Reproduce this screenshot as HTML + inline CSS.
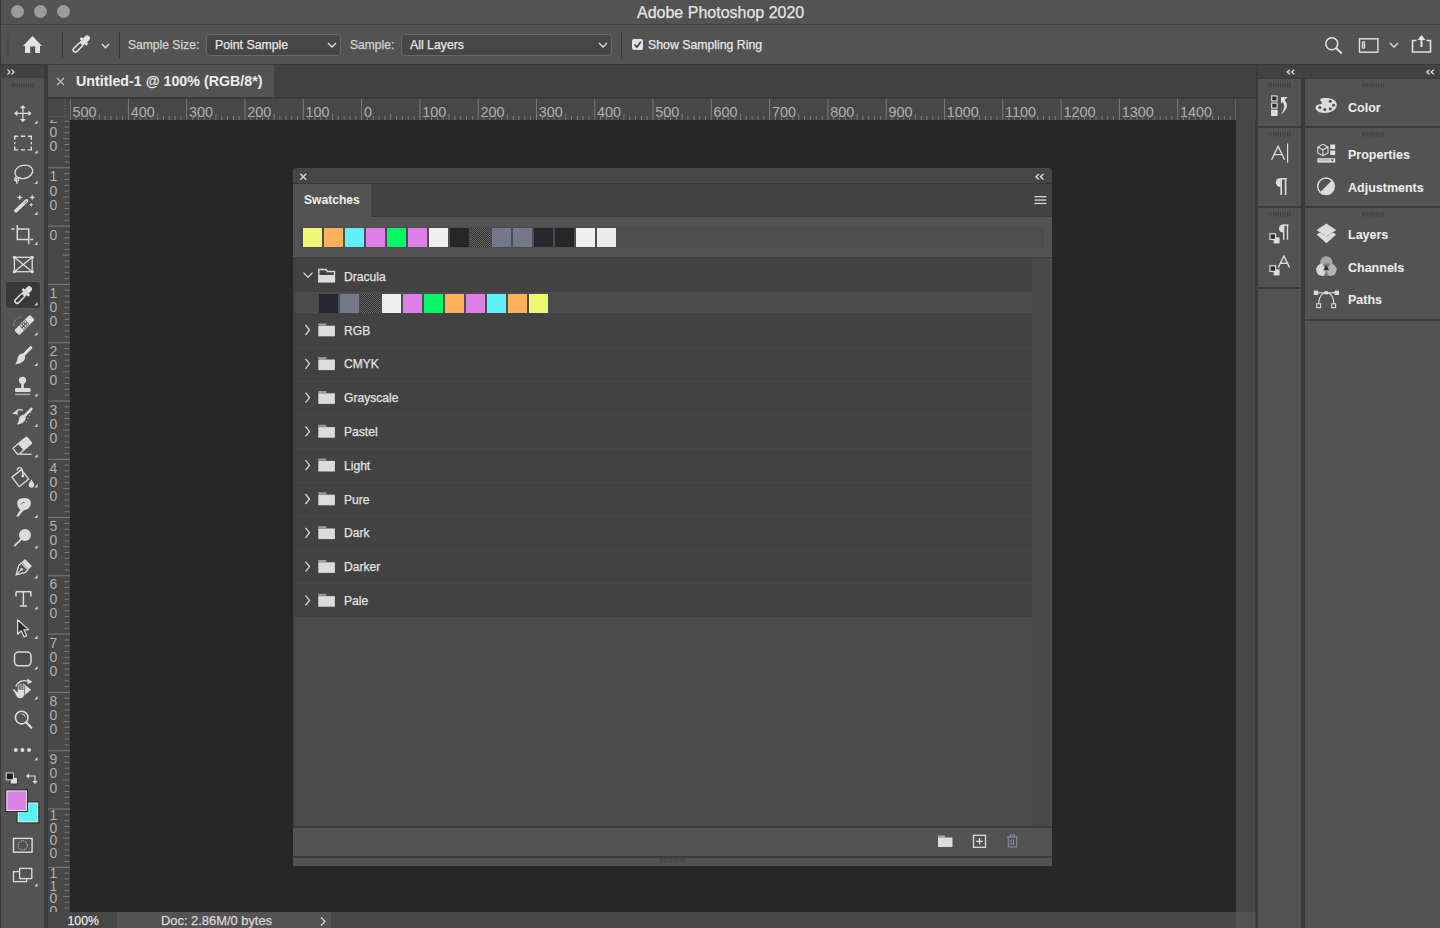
<!DOCTYPE html>
<html><head><meta charset="utf-8">
<style>
*{margin:0;padding:0;box-sizing:border-box}
html,body{width:1440px;height:928px;overflow:hidden;background:#3a3a3a;font-family:"Liberation Sans",sans-serif;color:#d8d8d8}
.a{position:absolute}
svg{position:absolute;overflow:visible}
.t{position:absolute;white-space:pre;line-height:1;-webkit-text-stroke:0.25px currentColor}
.b{font-weight:bold;-webkit-text-stroke:0.05px currentColor}
</style></head><body>

<div class="a" style="left:0px;top:0px;width:1440px;height:24px;background:#535353;"></div>
<div class="a" style="left:0px;top:24px;width:1440px;height:1.6px;background:#404040;"></div>
<div class="t" style="left:637px;top:5px;font-size:16px;color:#e4e4e4;">Adobe Photoshop 2020</div>
<div class="a" style="left:10.5px;top:4.5px;width:13px;height:13px;background:#9c9c9c;border-radius:50%"></div>
<div class="a" style="left:33.5px;top:4.5px;width:13px;height:13px;background:#9c9c9c;border-radius:50%"></div>
<div class="a" style="left:56.5px;top:4.5px;width:13px;height:13px;background:#9c9c9c;border-radius:50%"></div>
<div class="a" style="left:0px;top:25px;width:1440px;height:39px;background:#535353;"></div>
<div class="a" style="left:0px;top:64px;width:1440px;height:1px;background:#3a3a3a;"></div>
<svg style="left:0;top:0" width="1440" height="64">
<g fill="#3e3e3e"><rect x="7" y="34" width="1.5" height="1"/><rect x="7" y="36" width="1.5" height="1"/><rect x="7" y="38" width="1.5" height="1"/><rect x="7" y="40" width="1.5" height="1"/><rect x="7" y="42" width="1.5" height="1"/><rect x="7" y="44" width="1.5" height="1"/><rect x="7" y="46" width="1.5" height="1"/><rect x="7" y="48" width="1.5" height="1"/><rect x="7" y="50" width="1.5" height="1"/><rect x="7" y="52" width="1.5" height="1"/><rect x="7" y="54" width="1.5" height="1"/></g>
<path d="M32.5 36 L42 46 L40 46 L40 53 L35.2 53 L35.2 46.5 L30.2 46.5 L30.2 53 L25 53 L25 46 L23 46 Z" fill="#e2e2e2"/>
<rect x="62" y="32" width="1" height="26" fill="#3a3a3a"/>
<rect x="119" y="32" width="1" height="26" fill="#3a3a3a"/>
<rect x="621" y="32" width="1" height="26" fill="#3a3a3a"/>
<g transform="translate(81.3 44) rotate(45)" fill="#e2e2e2">
<path d="M-2.8 -5 L-2.8 -8.2 A2.8 2.8 0 0 1 2.8 -8.2 L2.8 -5 Z"/>
<rect x="-4.8" y="-5" width="9.6" height="2.6"/>
<rect x="-2.6" y="-2.6" width="5.2" height="2.8"/>
<path d="M-2.2 0 L-2.2 8.4 A2.2 2.2 0 0 0 2.2 8.4 L2.2 0" fill="none" stroke="#e2e2e2" stroke-width="1.5"/>
</g>
<path d="M102 44 L105.5 47.8 L109 44" fill="none" stroke="#e2e2e2" stroke-width="1.3"/>
<circle cx="1331.8" cy="43.8" r="6" fill="none" stroke="#e2e2e2" stroke-width="1.6"/>
<path d="M1336 48 L1341.8 53.5" stroke="#e2e2e2" stroke-width="2"/>
<rect x="1359.5" y="38.8" width="18.4" height="13.4" fill="none" stroke="#e2e2e2" stroke-width="1.4"/>
<rect x="1361.8" y="41.2" width="3.4" height="7.6" rx="1.2" fill="#e2e2e2"/><g fill="#555"><rect x="1362.8" y="42.6" width="1.4" height="1"/><rect x="1362.8" y="44.6" width="1.4" height="1"/><rect x="1362.8" y="46.6" width="1.4" height="1"/></g>
<path d="M1390 43 L1394 47 L1398 43" fill="none" stroke="#e2e2e2" stroke-width="1.3"/>
<path d="M1416.5 40.5 L1412.5 40.5 L1412.5 52 L1430.5 52 L1430.5 40.5 L1426.5 40.5" fill="none" stroke="#e2e2e2" stroke-width="1.6"/>
<rect x="1420.5" y="38.5" width="2" height="8.5" fill="#e2e2e2"/>
<path d="M1417.5 40 L1421.5 35 L1425.5 40 Z" fill="#e2e2e2"/>
</svg>
<div class="t" style="left:128px;top:39px;font-size:12.1px;color:#d4d4d4;">Sample Size:</div>
<div class="a" style="left:206px;top:34px;width:135px;height:22px;background:#464646;border:1px solid #686868;border-radius:4px"></div>
<div class="t" style="left:215px;top:39px;font-size:12.3px;color:#e6e6e6;">Point Sample</div>
<div class="t" style="left:350px;top:39px;font-size:12.1px;color:#d4d4d4;">Sample:</div>
<div class="a" style="left:401px;top:34px;width:211px;height:22px;background:#464646;border:1px solid #686868;border-radius:4px"></div>
<div class="t" style="left:410px;top:39px;font-size:12.3px;color:#e6e6e6;">All Layers</div>
<div class="a" style="left:632px;top:39px;width:11px;height:11px;background:#e2e2e2;border-radius:2px"></div>
<svg style="left:0;top:0" width="700" height="64"><path d="M328 43 L332 47 L336 43" fill="none" stroke="#e2e2e2" stroke-width="1.3"/><path d="M599 43 L603 47 L607 43" fill="none" stroke="#e2e2e2" stroke-width="1.3"/><path d="M634.5 44.5 L637 47 L640.8 41.8" fill="none" stroke="#3a3a3a" stroke-width="1.6"/></svg>
<div class="t" style="left:648px;top:39px;font-size:12.3px;color:#e6e6e6;">Show Sampling Ring</div>
<div class="a" style="left:1px;top:65px;width:43px;height:863px;background:#535353;"></div>
<div class="a" style="left:1px;top:65px;width:43px;height:13px;background:#424242;"></div>
<svg style="left:0;top:0" width="46" height="928">
<g fill="none" stroke="#dcdcdc" stroke-width="1.2"><path d="M7.5 69.5 L10 72 L7.5 74.5 M11.5 69.5 L14 72 L11.5 74.5"/></g>
<g fill="#3c3c3c"><rect x="12" y="83" width="1" height="4.5"/><rect x="14.3" y="83" width="1" height="4.5"/><rect x="16.6" y="83" width="1" height="4.5"/><rect x="18.9" y="83" width="1" height="4.5"/><rect x="21.2" y="83" width="1" height="4.5"/><rect x="23.5" y="83" width="1" height="4.5"/><rect x="25.8" y="83" width="1" height="4.5"/><rect x="28.1" y="83" width="1" height="4.5"/><rect x="30.4" y="83" width="1" height="4.5"/><rect x="32.7" y="83" width="1" height="4.5"/></g>
<g fill="#c8c8c8">
<path d="M37.6 120.3 V123.7 H34.2 Z"/><path d="M37.6 150 V153.4 H34.2 Z"/><path d="M37.6 180.5 V183.9 H34.2 Z"/><path d="M37.6 211.5 V214.9 H34.2 Z"/><path d="M37.6 241.5 V244.9 H34.2 Z"/>
<path d="M37.6 302 V305.4 H34.2 Z"/><path d="M37.6 332 V335.4 H34.2 Z"/><path d="M37.6 362.5 V365.9 H34.2 Z"/><path d="M37.6 393 V396.4 H34.2 Z"/><path d="M37.6 423.5 V426.9 H34.2 Z"/><path d="M37.6 454 V457.4 H34.2 Z"/><path d="M37.6 484 V487.4 H34.2 Z"/><path d="M37.6 514.5 V517.9 H34.2 Z"/><path d="M37.6 545 V548.4 H34.2 Z"/><path d="M37.6 575 V578.4 H34.2 Z"/><path d="M37.6 606 V609.4 H34.2 Z"/><path d="M37.6 635.5 V638.9 H34.2 Z"/><path d="M37.6 666 V669.4 H34.2 Z"/><path d="M37.6 696 V699.4 H34.2 Z"/><path d="M37.6 757 V760.4 H34.2 Z"/><path d="M37.6 883 V886.4 H34.2 Z"/>
</g>
<!-- move -->
<g fill="#dcdcdc" stroke="none">
<rect x="22.25" y="107.5" width="1.25" height="11.8"/><rect x="16.5" y="112.75" width="12.8" height="1.25"/>
<path d="M22.85 105 L25.8 108.3 L19.9 108.3 Z"/><path d="M22.85 122.3 L25.8 119 L19.9 119 Z"/>
<path d="M14 113.35 L17.3 110.4 L17.3 116.3 Z"/><path d="M31.6 113.35 L28.3 110.4 L28.3 116.3 Z"/>
</g>
<!-- marquee -->
<path d="M14.7 139.8 V136.3 H18.2 M20.9 136.3 H25.1 M27.8 136.3 H31.3 V139.8 M31.3 142 V144.2 M31.3 146.4 V149.9 H27.8 M25.1 149.9 H20.9 M18.2 149.9 H14.7 V146.4 M14.7 144.2 V142" fill="none" stroke="#dcdcdc" stroke-width="1.4"/>
<!-- lasso -->
<g fill="none" stroke="#dcdcdc" stroke-width="1.3">
<ellipse cx="23.8" cy="171.8" rx="9" ry="6.6" transform="rotate(-12 23.8 171.8)"/>
<path d="M16.5 176.5 C14 178 14 181 16.5 181.2 C19 181.4 19.5 178.5 17.2 178.2 C15.5 178 16.5 182 17.2 184"/>
</g>
<!-- magic wand -->
<path d="M16 210.8 L26.6 200.8" stroke="#dcdcdc" stroke-width="3.6" stroke-linecap="round"/>
<path d="M24.6 203.2 L26.8 201.1" stroke="#535353" stroke-width="0.9"/>
<g fill="#dcdcdc">
<path d="M19.8 194.4 L20.6 196.6 L22.8 197.4 L20.6 198.2 L19.8 200.4 L19 198.2 L16.8 197.4 L19 196.6 Z"/>
<path d="M32.2 194.4 L33 196.6 L35.2 197.4 L33 198.2 L32.2 200.4 L31.4 198.2 L29.2 197.4 L31.4 196.6 Z"/>
<path d="M31.2 202.6 L31.8 204.2 L33.4 204.8 L31.8 205.4 L31.2 207 L30.6 205.4 L29 204.8 L30.6 204.2 Z"/>
</g>
<!-- crop -->
<path d="M17.3 225 V239.5 H28.7 M17.3 229.1 H28.7 V244 M11.4 229.1 H14.6 M30.2 239.5 H33.2" fill="none" stroke="#dcdcdc" stroke-width="1.5"/>
<!-- frame -->
<g fill="none" stroke="#dcdcdc" stroke-width="1.3"><rect x="14.4" y="257.3" width="17.8" height="14.4"/><path d="M14.4 257.3 L32.2 271.7 M32.2 257.3 L14.4 271.7"/></g>
<g fill="#dcdcdc"><circle cx="14.4" cy="257.3" r="1.6"/><circle cx="32.2" cy="257.3" r="1.6"/><circle cx="14.4" cy="271.7" r="1.6"/><circle cx="32.2" cy="271.7" r="1.6"/></g>
<!-- eyedropper selected -->
<rect x="5.5" y="281.5" width="35" height="27" rx="3" fill="#393939" stroke="#5a5a5a" stroke-width="1"/>
<path d="M37.6 302 V305.4 H34.2 Z" fill="#c8c8c8"/>
<g transform="translate(23.2 295) rotate(45)" fill="#dcdcdc">
<path d="M-2.8 -5 L-2.8 -8.4 A2.8 2.8 0 0 1 2.8 -8.4 L2.8 -5 Z"/>
<rect x="-4.8" y="-5" width="9.6" height="2.6"/>
<rect x="-2.6" y="-2.6" width="5.2" height="2.8"/>
<path d="M-2.2 0 L-2.2 8.6 A2.2 2.2 0 0 0 2.2 8.6 L2.2 0" fill="none" stroke="#dcdcdc" stroke-width="1.5"/>
</g>
<!-- healing -->
<g transform="translate(24.5 325) rotate(-45)">
<rect x="-11" y="-3.6" width="22" height="7.2" rx="1.5" fill="#dcdcdc"/>
<rect x="-4.2" y="-3" width="8.4" height="6" fill="#535353"/>
<g fill="#dcdcdc"><rect x="-3.6" y="-2.4" width="1.8" height="1.8"/><rect x="-0.9" y="-2.4" width="1.8" height="1.8"/><rect x="1.8" y="-2.4" width="1.8" height="1.8"/><rect x="-3.6" y="0.6" width="1.8" height="1.8"/><rect x="-0.9" y="0.6" width="1.8" height="1.8"/><rect x="1.8" y="0.6" width="1.8" height="1.8"/></g>
</g>
<path d="M13.8 326 A8 8 0 0 1 22.5 317" fill="none" stroke="#bdbdbd" stroke-width="1" stroke-dasharray="1 1.4"/>
<!-- brush -->
<path d="M30.8 347.6 L23.8 354.8" stroke="#dcdcdc" stroke-width="3" stroke-linecap="round"/>
<path d="M22.6 353.6 C19.5 353.8 17.8 356 17.5 358.5 C17.3 360.5 16.5 362.5 15.3 364.2 C18 364 21 363.2 23 361.5 C25 359.8 25.5 357.5 25 356 Z" fill="#dcdcdc"/>
<!-- stamp -->
<g fill="#dcdcdc"><circle cx="22.5" cy="380.3" r="3.6"/><rect x="21.2" y="382.5" width="2.6" height="5.8"/><rect x="15" y="388" width="15.6" height="4" rx="1"/></g>
<rect x="15.2" y="393.6" width="15.2" height="1.6" fill="#a8a8a8"/>
<!-- history brush -->
<path d="M31.4 409 L24.6 415.8" stroke="#dcdcdc" stroke-width="2.6" stroke-linecap="round"/>
<path d="M23.5 414.8 C20.8 415 19.3 417 19 419.2 C18.8 421 18 422.8 16.8 424.5 C19.3 424.3 22 423.5 23.7 422 C25.6 420.3 26 418.3 25.6 417 Z" fill="#dcdcdc"/>
<path d="M22.8 410.5 C20.5 409.3 17.5 409.8 15.5 412" fill="none" stroke="#dcdcdc" stroke-width="1.2"/>
<path d="M12 413.5 L17.5 410 L17.8 414.8 Z" fill="#dcdcdc"/>
<g fill="#b8b8b8"><circle cx="29.5" cy="415.5" r="0.6"/><circle cx="28" cy="418.5" r="0.6"/><circle cx="26.5" cy="421.5" r="0.6"/><circle cx="30.5" cy="412.5" r="0.6"/></g>
<!-- eraser -->
<g transform="translate(22.3 445.8) rotate(-40)">
<rect x="-9" y="-4.2" width="18" height="8.4" rx="1" fill="none" stroke="#dcdcdc" stroke-width="1.3"/>
<rect x="-2" y="-4.2" width="11" height="8.4" rx="1" fill="#dcdcdc"/>
</g>
<rect x="20" y="453.6" width="11.6" height="1.3" fill="#dcdcdc"/>
<!-- bucket -->
<g transform="translate(20.3 478.2) rotate(-38)">
<rect x="-6" y="-6" width="12" height="12" fill="none" stroke="#dcdcdc" stroke-width="1.3"/>
</g>
<path d="M17.2 470.5 C17.5 467 21.5 466.8 22.3 469.8 L22.9 475.6" fill="none" stroke="#dcdcdc" stroke-width="1.2"/>
<circle cx="22.9" cy="476" r="1.4" fill="#dcdcdc"/>
<path d="M31.4 479.6 C29.9 482 28.7 483.4 28.7 485 A2.7 2.7 0 0 0 34.1 485 C34.1 483.4 32.9 482 31.4 479.6 Z" fill="#dcdcdc"/>
<!-- smudge -->
<path d="M17.5 505.5 C16.5 501.5 18 498.5 22.5 498.2 C26.8 497.8 30.5 498.8 30.8 502.5 C31 505.5 29.5 508.5 26.5 509.5 C24.8 510 23.5 510.5 22.5 511.5 L18.8 516.2 C17.8 517.2 16.2 516.5 16.8 515.2 L20.5 509.5 C19.5 509.2 18 507.5 17.5 505.5 Z" fill="#dcdcdc"/>
<path d="M20.8 504.5 C21.8 502.8 23.2 502.2 24.8 502.5" fill="none" stroke="#535353" stroke-width="0.9"/>
<!-- dodge -->
<circle cx="25" cy="535" r="6" fill="#dcdcdc"/>
<path d="M14.8 545.6 L21 539.4" stroke="#dcdcdc" stroke-width="1.8" stroke-linecap="round"/>
<!-- pen -->
<g transform="translate(23.5 567.5) rotate(45)">
<path d="M-4.8 -1.5 L-4.8 2 L0 10.5 L4.8 2 L4.8 -1.5 Z" fill="none" stroke="#dcdcdc" stroke-width="1.3"/>
<rect x="-5" y="-7" width="10" height="4.6" fill="#dcdcdc"/>
<path d="M0 2.5 V10" stroke="#dcdcdc" stroke-width="1"/>
<circle cx="0" cy="2.5" r="1.3" fill="#dcdcdc"/>
</g>
<!-- type -->
<path d="M16 591.8 H30.8 V596.5 M16 591.8 V596.5 M23.4 591.8 V606 M19.8 606 H27" fill="none" stroke="#dcdcdc" stroke-width="1.5"/>
<!-- path select -->
<path d="M17.6 619.8 L17.6 634.2 L21.2 630.8 L24 636.8 L26.6 635.6 L23.8 629.8 L28.6 629.6 Z" fill="#2c2c2c" stroke="#dcdcdc" stroke-width="1.2" stroke-linejoin="round"/>
<!-- shape -->
<rect x="14.5" y="652" width="16.5" height="13.8" rx="4" fill="#4e4e4e" stroke="#dcdcdc" stroke-width="1.5"/>
<!-- hand rotate -->
<path d="M23 683.2 L31.2 689.8 L23 696.4 Z" fill="#dcdcdc"/>
<path d="M15.8 686.5 C17.5 681.5 23 679.5 28.5 681.2" fill="none" stroke="#dcdcdc" stroke-width="1.2"/>
<path d="M32.5 681.8 L27.2 678.6 L27.6 684.2 Z" fill="#dcdcdc"/>
<g fill="#dcdcdc" stroke="#535353" stroke-width="0.7">
<path d="M15.6 690.2 C14.6 689 13.2 688.6 12.8 689.3 C12.4 690 13.6 691.4 14.8 693.2 C16 695.5 17 698.6 20 698.6 C23 698.6 24.6 696.5 24.6 693.5 V686.4 C24.6 685.2 22.8 685.2 22.8 686.4 V690 V684.6 C22.8 683.4 21 683.4 21 684.6 V689.8 V684 C21 682.8 19.2 682.8 19.2 684 V689.8 V685 C19.2 683.8 17.4 683.8 17.4 685 V692 C16.8 691.4 16.2 690.8 15.6 690.2 Z"/>
</g>
<!-- zoom -->
<circle cx="21.7" cy="717.6" r="6.3" fill="none" stroke="#dcdcdc" stroke-width="1.6"/>
<path d="M26.2 722.3 L31.3 727.7" stroke="#dcdcdc" stroke-width="2.3" stroke-linecap="round"/>
<path d="M21.5 713.8 A4 4 0 0 1 25.2 716.8" fill="none" stroke="#dcdcdc" stroke-width="1"/>
<!-- more -->
<g fill="#dcdcdc"><circle cx="15.8" cy="750" r="2"/><circle cx="22.4" cy="750" r="2"/><circle cx="29" cy="750" r="2"/></g>
<!-- default colors -->
<rect x="10.2" y="777.2" width="7.2" height="6.8" fill="#dcdcdc" stroke="#2a2a2a" stroke-width="0.8"/>
<rect x="6.2" y="773" width="7.2" height="6.8" fill="#1e1e1e" stroke="#dcdcdc" stroke-width="1"/>
<!-- swap -->
<path d="M28.5 776 H35 V782" fill="none" stroke="#dcdcdc" stroke-width="1.2"/>
<path d="M26 776 L29 773.3 V778.7 Z M35 784 L32.3 781 H37.7 Z" fill="#dcdcdc"/>
<!-- colors -->
<rect x="16.6" y="801.5" width="22.6" height="21.8" fill="#2a2a2a"/>
<rect x="17.6" y="802.5" width="20.6" height="19.8" fill="#eeeeee"/>
<rect x="18.6" y="803.5" width="18.6" height="17.8" fill="#5ef0f7"/>
<rect x="5.3" y="789.4" width="22.6" height="22.6" fill="#2a2a2a"/>
<rect x="6.3" y="790.4" width="20.6" height="20.6" fill="#eeeeee"/>
<rect x="7.3" y="791.4" width="18.6" height="18.6" fill="#dc80e8"/>
<!-- quick mask -->
<rect x="13.5" y="838.4" width="18.6" height="13.8" fill="none" stroke="#dcdcdc" stroke-width="1.4"/>
<circle cx="22.7" cy="845.3" r="4.6" fill="none" stroke="#dcdcdc" stroke-width="1" stroke-dasharray="1.1 1.3"/>
<!-- screen mode -->
<rect x="19.6" y="868.4" width="12.2" height="10.2" fill="none" stroke="#dcdcdc" stroke-width="1.3"/>
<path d="M19.6 871.6 H13.5 V881.6 H26.6 V878.6" fill="none" stroke="#dcdcdc" stroke-width="1.3"/>
</svg>

<div class="a" style="left:48px;top:65px;width:1208px;height:32px;background:#424242;"></div>
<div class="a" style="left:48px;top:65px;width:226px;height:32px;background:#535353;"></div>
<div class="a" style="left:48px;top:97px;width:1208px;height:2px;background:#3a3a3a;"></div>
<svg style="left:0;top:0" width="80" height="98"><path d="M57 78 L64 85 M64 78 L57 85" stroke="#bdbdbd" stroke-width="1.2"/></svg>
<div class="t b" style="left:76px;top:74.2px;font-size:14.25px;color:#ececec;">Untitled-1 @ 100% (RGB/8*)</div>
<div class="a" style="left:48px;top:99px;width:1208px;height:21px;background:#474747;"></div>
<div class="a" style="left:48px;top:120px;width:22px;height:792px;background:#474747;"></div>
<svg style="left:0;top:0" width="80" height="130"><path d="M48 116.5 H68" stroke="#666" stroke-width="1" stroke-dasharray="1 2"/><path d="M64.5 99 V120" stroke="#666" stroke-width="1" stroke-dasharray="1 2"/></svg>
<div class="a" style="left:70px;top:120px;width:1166px;height:792px;background:#272727;"></div>
<div class="a" style="left:70px;top:99px;width:1166px;height:21px;overflow:hidden"><div class="a" style="left:-70px;top:-99px;width:1440px;height:928px"><svg style="left:0;top:0" width="1440" height="928"><rect x="69.7" y="99" width="1" height="21" fill="#7a7a7a"/><text x="72.5" y="117" font-size="14.4" fill="#b0b0b0">500</text><rect x="75.5" y="116" width="1" height="4" fill="#7a7a7a"/><rect x="81.3" y="116" width="1" height="4" fill="#7a7a7a"/><rect x="87.1" y="116" width="1" height="4" fill="#7a7a7a"/><rect x="93.0" y="116" width="1" height="4" fill="#7a7a7a"/><rect x="98.8" y="114" width="1" height="6" fill="#7a7a7a"/><rect x="104.6" y="116" width="1" height="4" fill="#7a7a7a"/><rect x="110.5" y="116" width="1" height="4" fill="#7a7a7a"/><rect x="116.3" y="116" width="1" height="4" fill="#7a7a7a"/><rect x="122.1" y="116" width="1" height="4" fill="#7a7a7a"/><rect x="127.9" y="99" width="1" height="21" fill="#7a7a7a"/><text x="130.7" y="117" font-size="14.4" fill="#b0b0b0">400</text><rect x="133.8" y="116" width="1" height="4" fill="#7a7a7a"/><rect x="139.6" y="116" width="1" height="4" fill="#7a7a7a"/><rect x="145.4" y="116" width="1" height="4" fill="#7a7a7a"/><rect x="151.3" y="116" width="1" height="4" fill="#7a7a7a"/><rect x="157.1" y="114" width="1" height="6" fill="#7a7a7a"/><rect x="162.9" y="116" width="1" height="4" fill="#7a7a7a"/><rect x="168.7" y="116" width="1" height="4" fill="#7a7a7a"/><rect x="174.6" y="116" width="1" height="4" fill="#7a7a7a"/><rect x="180.4" y="116" width="1" height="4" fill="#7a7a7a"/><rect x="186.2" y="99" width="1" height="21" fill="#7a7a7a"/><text x="189.0" y="117" font-size="14.4" fill="#b0b0b0">300</text><rect x="192.1" y="116" width="1" height="4" fill="#7a7a7a"/><rect x="197.9" y="116" width="1" height="4" fill="#7a7a7a"/><rect x="203.7" y="116" width="1" height="4" fill="#7a7a7a"/><rect x="209.5" y="116" width="1" height="4" fill="#7a7a7a"/><rect x="215.4" y="114" width="1" height="6" fill="#7a7a7a"/><rect x="221.2" y="116" width="1" height="4" fill="#7a7a7a"/><rect x="227.0" y="116" width="1" height="4" fill="#7a7a7a"/><rect x="232.9" y="116" width="1" height="4" fill="#7a7a7a"/><rect x="238.7" y="116" width="1" height="4" fill="#7a7a7a"/><rect x="244.5" y="99" width="1" height="21" fill="#7a7a7a"/><text x="247.3" y="117" font-size="14.4" fill="#b0b0b0">200</text><rect x="250.3" y="116" width="1" height="4" fill="#7a7a7a"/><rect x="256.2" y="116" width="1" height="4" fill="#7a7a7a"/><rect x="262.0" y="116" width="1" height="4" fill="#7a7a7a"/><rect x="267.8" y="116" width="1" height="4" fill="#7a7a7a"/><rect x="273.7" y="114" width="1" height="6" fill="#7a7a7a"/><rect x="279.5" y="116" width="1" height="4" fill="#7a7a7a"/><rect x="285.3" y="116" width="1" height="4" fill="#7a7a7a"/><rect x="291.2" y="116" width="1" height="4" fill="#7a7a7a"/><rect x="297.0" y="116" width="1" height="4" fill="#7a7a7a"/><rect x="302.8" y="99" width="1" height="21" fill="#7a7a7a"/><text x="305.6" y="117" font-size="14.4" fill="#b0b0b0">100</text><rect x="308.6" y="116" width="1" height="4" fill="#7a7a7a"/><rect x="314.5" y="116" width="1" height="4" fill="#7a7a7a"/><rect x="320.3" y="116" width="1" height="4" fill="#7a7a7a"/><rect x="326.1" y="116" width="1" height="4" fill="#7a7a7a"/><rect x="332.0" y="114" width="1" height="6" fill="#7a7a7a"/><rect x="337.8" y="116" width="1" height="4" fill="#7a7a7a"/><rect x="343.6" y="116" width="1" height="4" fill="#7a7a7a"/><rect x="349.4" y="116" width="1" height="4" fill="#7a7a7a"/><rect x="355.3" y="116" width="1" height="4" fill="#7a7a7a"/><rect x="361.1" y="99" width="1" height="21" fill="#7a7a7a"/><text x="363.9" y="117" font-size="14.4" fill="#b0b0b0">0</text><rect x="366.9" y="116" width="1" height="4" fill="#7a7a7a"/><rect x="372.8" y="116" width="1" height="4" fill="#7a7a7a"/><rect x="378.6" y="116" width="1" height="4" fill="#7a7a7a"/><rect x="384.4" y="116" width="1" height="4" fill="#7a7a7a"/><rect x="390.2" y="114" width="1" height="6" fill="#7a7a7a"/><rect x="396.1" y="116" width="1" height="4" fill="#7a7a7a"/><rect x="401.9" y="116" width="1" height="4" fill="#7a7a7a"/><rect x="407.7" y="116" width="1" height="4" fill="#7a7a7a"/><rect x="413.6" y="116" width="1" height="4" fill="#7a7a7a"/><rect x="419.4" y="99" width="1" height="21" fill="#7a7a7a"/><text x="422.2" y="117" font-size="14.4" fill="#b0b0b0">100</text><rect x="425.2" y="116" width="1" height="4" fill="#7a7a7a"/><rect x="431.0" y="116" width="1" height="4" fill="#7a7a7a"/><rect x="436.9" y="116" width="1" height="4" fill="#7a7a7a"/><rect x="442.7" y="116" width="1" height="4" fill="#7a7a7a"/><rect x="448.5" y="114" width="1" height="6" fill="#7a7a7a"/><rect x="454.4" y="116" width="1" height="4" fill="#7a7a7a"/><rect x="460.2" y="116" width="1" height="4" fill="#7a7a7a"/><rect x="466.0" y="116" width="1" height="4" fill="#7a7a7a"/><rect x="471.9" y="116" width="1" height="4" fill="#7a7a7a"/><rect x="477.7" y="99" width="1" height="21" fill="#7a7a7a"/><text x="480.5" y="117" font-size="14.4" fill="#b0b0b0">200</text><rect x="483.5" y="116" width="1" height="4" fill="#7a7a7a"/><rect x="489.3" y="116" width="1" height="4" fill="#7a7a7a"/><rect x="495.2" y="116" width="1" height="4" fill="#7a7a7a"/><rect x="501.0" y="116" width="1" height="4" fill="#7a7a7a"/><rect x="506.8" y="114" width="1" height="6" fill="#7a7a7a"/><rect x="512.7" y="116" width="1" height="4" fill="#7a7a7a"/><rect x="518.5" y="116" width="1" height="4" fill="#7a7a7a"/><rect x="524.3" y="116" width="1" height="4" fill="#7a7a7a"/><rect x="530.1" y="116" width="1" height="4" fill="#7a7a7a"/><rect x="536.0" y="99" width="1" height="21" fill="#7a7a7a"/><text x="538.8" y="117" font-size="14.4" fill="#b0b0b0">300</text><rect x="541.8" y="116" width="1" height="4" fill="#7a7a7a"/><rect x="547.6" y="116" width="1" height="4" fill="#7a7a7a"/><rect x="553.5" y="116" width="1" height="4" fill="#7a7a7a"/><rect x="559.3" y="116" width="1" height="4" fill="#7a7a7a"/><rect x="565.1" y="114" width="1" height="6" fill="#7a7a7a"/><rect x="570.9" y="116" width="1" height="4" fill="#7a7a7a"/><rect x="576.8" y="116" width="1" height="4" fill="#7a7a7a"/><rect x="582.6" y="116" width="1" height="4" fill="#7a7a7a"/><rect x="588.4" y="116" width="1" height="4" fill="#7a7a7a"/><rect x="594.3" y="99" width="1" height="21" fill="#7a7a7a"/><text x="597.1" y="117" font-size="14.4" fill="#b0b0b0">400</text><rect x="600.1" y="116" width="1" height="4" fill="#7a7a7a"/><rect x="605.9" y="116" width="1" height="4" fill="#7a7a7a"/><rect x="611.7" y="116" width="1" height="4" fill="#7a7a7a"/><rect x="617.6" y="116" width="1" height="4" fill="#7a7a7a"/><rect x="623.4" y="114" width="1" height="6" fill="#7a7a7a"/><rect x="629.2" y="116" width="1" height="4" fill="#7a7a7a"/><rect x="635.1" y="116" width="1" height="4" fill="#7a7a7a"/><rect x="640.9" y="116" width="1" height="4" fill="#7a7a7a"/><rect x="646.7" y="116" width="1" height="4" fill="#7a7a7a"/><rect x="652.5" y="99" width="1" height="21" fill="#7a7a7a"/><text x="655.3" y="117" font-size="14.4" fill="#b0b0b0">500</text><rect x="658.4" y="116" width="1" height="4" fill="#7a7a7a"/><rect x="664.2" y="116" width="1" height="4" fill="#7a7a7a"/><rect x="670.0" y="116" width="1" height="4" fill="#7a7a7a"/><rect x="675.9" y="116" width="1" height="4" fill="#7a7a7a"/><rect x="681.7" y="114" width="1" height="6" fill="#7a7a7a"/><rect x="687.5" y="116" width="1" height="4" fill="#7a7a7a"/><rect x="693.4" y="116" width="1" height="4" fill="#7a7a7a"/><rect x="699.2" y="116" width="1" height="4" fill="#7a7a7a"/><rect x="705.0" y="116" width="1" height="4" fill="#7a7a7a"/><rect x="710.8" y="99" width="1" height="21" fill="#7a7a7a"/><text x="713.6" y="117" font-size="14.4" fill="#b0b0b0">600</text><rect x="716.7" y="116" width="1" height="4" fill="#7a7a7a"/><rect x="722.5" y="116" width="1" height="4" fill="#7a7a7a"/><rect x="728.3" y="116" width="1" height="4" fill="#7a7a7a"/><rect x="734.2" y="116" width="1" height="4" fill="#7a7a7a"/><rect x="740.0" y="114" width="1" height="6" fill="#7a7a7a"/><rect x="745.8" y="116" width="1" height="4" fill="#7a7a7a"/><rect x="751.6" y="116" width="1" height="4" fill="#7a7a7a"/><rect x="757.5" y="116" width="1" height="4" fill="#7a7a7a"/><rect x="763.3" y="116" width="1" height="4" fill="#7a7a7a"/><rect x="769.1" y="99" width="1" height="21" fill="#7a7a7a"/><text x="771.9" y="117" font-size="14.4" fill="#b0b0b0">700</text><rect x="775.0" y="116" width="1" height="4" fill="#7a7a7a"/><rect x="780.8" y="116" width="1" height="4" fill="#7a7a7a"/><rect x="786.6" y="116" width="1" height="4" fill="#7a7a7a"/><rect x="792.4" y="116" width="1" height="4" fill="#7a7a7a"/><rect x="798.3" y="114" width="1" height="6" fill="#7a7a7a"/><rect x="804.1" y="116" width="1" height="4" fill="#7a7a7a"/><rect x="809.9" y="116" width="1" height="4" fill="#7a7a7a"/><rect x="815.8" y="116" width="1" height="4" fill="#7a7a7a"/><rect x="821.6" y="116" width="1" height="4" fill="#7a7a7a"/><rect x="827.4" y="99" width="1" height="21" fill="#7a7a7a"/><text x="830.2" y="117" font-size="14.4" fill="#b0b0b0">800</text><rect x="833.2" y="116" width="1" height="4" fill="#7a7a7a"/><rect x="839.1" y="116" width="1" height="4" fill="#7a7a7a"/><rect x="844.9" y="116" width="1" height="4" fill="#7a7a7a"/><rect x="850.7" y="116" width="1" height="4" fill="#7a7a7a"/><rect x="856.6" y="114" width="1" height="6" fill="#7a7a7a"/><rect x="862.4" y="116" width="1" height="4" fill="#7a7a7a"/><rect x="868.2" y="116" width="1" height="4" fill="#7a7a7a"/><rect x="874.1" y="116" width="1" height="4" fill="#7a7a7a"/><rect x="879.9" y="116" width="1" height="4" fill="#7a7a7a"/><rect x="885.7" y="99" width="1" height="21" fill="#7a7a7a"/><text x="888.5" y="117" font-size="14.4" fill="#b0b0b0">900</text><rect x="891.5" y="116" width="1" height="4" fill="#7a7a7a"/><rect x="897.4" y="116" width="1" height="4" fill="#7a7a7a"/><rect x="903.2" y="116" width="1" height="4" fill="#7a7a7a"/><rect x="909.0" y="116" width="1" height="4" fill="#7a7a7a"/><rect x="914.9" y="114" width="1" height="6" fill="#7a7a7a"/><rect x="920.7" y="116" width="1" height="4" fill="#7a7a7a"/><rect x="926.5" y="116" width="1" height="4" fill="#7a7a7a"/><rect x="932.3" y="116" width="1" height="4" fill="#7a7a7a"/><rect x="938.2" y="116" width="1" height="4" fill="#7a7a7a"/><rect x="944.0" y="99" width="1" height="21" fill="#7a7a7a"/><text x="946.8" y="117" font-size="14.4" fill="#b0b0b0">1000</text><rect x="949.8" y="116" width="1" height="4" fill="#7a7a7a"/><rect x="955.7" y="116" width="1" height="4" fill="#7a7a7a"/><rect x="961.5" y="116" width="1" height="4" fill="#7a7a7a"/><rect x="967.3" y="116" width="1" height="4" fill="#7a7a7a"/><rect x="973.1" y="114" width="1" height="6" fill="#7a7a7a"/><rect x="979.0" y="116" width="1" height="4" fill="#7a7a7a"/><rect x="984.8" y="116" width="1" height="4" fill="#7a7a7a"/><rect x="990.6" y="116" width="1" height="4" fill="#7a7a7a"/><rect x="996.5" y="116" width="1" height="4" fill="#7a7a7a"/><rect x="1002.3" y="99" width="1" height="21" fill="#7a7a7a"/><text x="1005.1" y="117" font-size="14.4" fill="#b0b0b0">1100</text><rect x="1008.1" y="116" width="1" height="4" fill="#7a7a7a"/><rect x="1013.9" y="116" width="1" height="4" fill="#7a7a7a"/><rect x="1019.8" y="116" width="1" height="4" fill="#7a7a7a"/><rect x="1025.6" y="116" width="1" height="4" fill="#7a7a7a"/><rect x="1031.4" y="114" width="1" height="6" fill="#7a7a7a"/><rect x="1037.3" y="116" width="1" height="4" fill="#7a7a7a"/><rect x="1043.1" y="116" width="1" height="4" fill="#7a7a7a"/><rect x="1048.9" y="116" width="1" height="4" fill="#7a7a7a"/><rect x="1054.8" y="116" width="1" height="4" fill="#7a7a7a"/><rect x="1060.6" y="99" width="1" height="21" fill="#7a7a7a"/><text x="1063.4" y="117" font-size="14.4" fill="#b0b0b0">1200</text><rect x="1066.4" y="116" width="1" height="4" fill="#7a7a7a"/><rect x="1072.2" y="116" width="1" height="4" fill="#7a7a7a"/><rect x="1078.1" y="116" width="1" height="4" fill="#7a7a7a"/><rect x="1083.9" y="116" width="1" height="4" fill="#7a7a7a"/><rect x="1089.7" y="114" width="1" height="6" fill="#7a7a7a"/><rect x="1095.6" y="116" width="1" height="4" fill="#7a7a7a"/><rect x="1101.4" y="116" width="1" height="4" fill="#7a7a7a"/><rect x="1107.2" y="116" width="1" height="4" fill="#7a7a7a"/><rect x="1113.0" y="116" width="1" height="4" fill="#7a7a7a"/><rect x="1118.9" y="99" width="1" height="21" fill="#7a7a7a"/><text x="1121.7" y="117" font-size="14.4" fill="#b0b0b0">1300</text><rect x="1124.7" y="116" width="1" height="4" fill="#7a7a7a"/><rect x="1130.5" y="116" width="1" height="4" fill="#7a7a7a"/><rect x="1136.4" y="116" width="1" height="4" fill="#7a7a7a"/><rect x="1142.2" y="116" width="1" height="4" fill="#7a7a7a"/><rect x="1148.0" y="114" width="1" height="6" fill="#7a7a7a"/><rect x="1153.8" y="116" width="1" height="4" fill="#7a7a7a"/><rect x="1159.7" y="116" width="1" height="4" fill="#7a7a7a"/><rect x="1165.5" y="116" width="1" height="4" fill="#7a7a7a"/><rect x="1171.3" y="116" width="1" height="4" fill="#7a7a7a"/><rect x="1177.2" y="99" width="1" height="21" fill="#7a7a7a"/><text x="1180.0" y="117" font-size="14.4" fill="#b0b0b0">1400</text><rect x="1183.0" y="116" width="1" height="4" fill="#7a7a7a"/><rect x="1188.8" y="116" width="1" height="4" fill="#7a7a7a"/><rect x="1194.6" y="116" width="1" height="4" fill="#7a7a7a"/><rect x="1200.5" y="116" width="1" height="4" fill="#7a7a7a"/><rect x="1206.3" y="114" width="1" height="6" fill="#7a7a7a"/><rect x="1212.1" y="116" width="1" height="4" fill="#7a7a7a"/><rect x="1218.0" y="116" width="1" height="4" fill="#7a7a7a"/><rect x="1223.8" y="116" width="1" height="4" fill="#7a7a7a"/><rect x="1229.6" y="116" width="1" height="4" fill="#7a7a7a"/><rect x="1235.5" y="99" width="1" height="21" fill="#7a7a7a"/><text x="1238.2" y="117" font-size="14.4" fill="#b0b0b0">1500</text><rect x="1241.3" y="116" width="1" height="4" fill="#7a7a7a"/><rect x="1247.1" y="116" width="1" height="4" fill="#7a7a7a"/><rect x="1252.9" y="116" width="1" height="4" fill="#7a7a7a"/><rect x="1258.8" y="116" width="1" height="4" fill="#7a7a7a"/><rect x="1264.6" y="114" width="1" height="6" fill="#7a7a7a"/><rect x="1270.4" y="116" width="1" height="4" fill="#7a7a7a"/><rect x="1276.3" y="116" width="1" height="4" fill="#7a7a7a"/><rect x="1282.1" y="116" width="1" height="4" fill="#7a7a7a"/><rect x="1287.9" y="116" width="1" height="4" fill="#7a7a7a"/></svg></div></div>
<div class="a" style="left:48px;top:120px;width:22px;height:792px;overflow:hidden"><div class="a" style="left:-48px;top:-120px;width:1440px;height:928px"><svg style="left:0;top:0" width="1440" height="928"><rect x="48" y="109.0" width="22" height="1" fill="#7a7a7a"/><text x="49.5" y="123.0" font-size="14" fill="#b0b0b0">2</text><text x="49.5" y="137.2" font-size="14" fill="#b0b0b0">0</text><text x="49.5" y="151.4" font-size="14" fill="#b0b0b0">0</text><rect x="64.5" y="114.8" width="4.5" height="1" fill="#7a7a7a"/><rect x="64.5" y="120.7" width="4.5" height="1" fill="#7a7a7a"/><rect x="64.5" y="126.5" width="4.5" height="1" fill="#7a7a7a"/><rect x="64.5" y="132.3" width="4.5" height="1" fill="#7a7a7a"/><rect x="63" y="138.2" width="6" height="1" fill="#7a7a7a"/><rect x="64.5" y="144.0" width="4.5" height="1" fill="#7a7a7a"/><rect x="64.5" y="149.8" width="4.5" height="1" fill="#7a7a7a"/><rect x="64.5" y="155.7" width="4.5" height="1" fill="#7a7a7a"/><rect x="64.5" y="161.5" width="4.5" height="1" fill="#7a7a7a"/><rect x="48" y="167.3" width="22" height="1" fill="#7a7a7a"/><text x="49.5" y="181.3" font-size="14" fill="#b0b0b0">1</text><text x="49.5" y="195.5" font-size="14" fill="#b0b0b0">0</text><text x="49.5" y="209.7" font-size="14" fill="#b0b0b0">0</text><rect x="64.5" y="173.1" width="4.5" height="1" fill="#7a7a7a"/><rect x="64.5" y="179.0" width="4.5" height="1" fill="#7a7a7a"/><rect x="64.5" y="184.8" width="4.5" height="1" fill="#7a7a7a"/><rect x="64.5" y="190.6" width="4.5" height="1" fill="#7a7a7a"/><rect x="63" y="196.5" width="6" height="1" fill="#7a7a7a"/><rect x="64.5" y="202.3" width="4.5" height="1" fill="#7a7a7a"/><rect x="64.5" y="208.1" width="4.5" height="1" fill="#7a7a7a"/><rect x="64.5" y="213.9" width="4.5" height="1" fill="#7a7a7a"/><rect x="64.5" y="219.8" width="4.5" height="1" fill="#7a7a7a"/><rect x="48" y="225.6" width="22" height="1" fill="#7a7a7a"/><text x="49.5" y="239.6" font-size="14" fill="#b0b0b0">0</text><rect x="64.5" y="231.4" width="4.5" height="1" fill="#7a7a7a"/><rect x="64.5" y="237.3" width="4.5" height="1" fill="#7a7a7a"/><rect x="64.5" y="243.1" width="4.5" height="1" fill="#7a7a7a"/><rect x="64.5" y="248.9" width="4.5" height="1" fill="#7a7a7a"/><rect x="63" y="254.7" width="6" height="1" fill="#7a7a7a"/><rect x="64.5" y="260.6" width="4.5" height="1" fill="#7a7a7a"/><rect x="64.5" y="266.4" width="4.5" height="1" fill="#7a7a7a"/><rect x="64.5" y="272.2" width="4.5" height="1" fill="#7a7a7a"/><rect x="64.5" y="278.1" width="4.5" height="1" fill="#7a7a7a"/><rect x="48" y="283.9" width="22" height="1" fill="#7a7a7a"/><text x="49.5" y="297.9" font-size="14" fill="#b0b0b0">1</text><text x="49.5" y="312.1" font-size="14" fill="#b0b0b0">0</text><text x="49.5" y="326.3" font-size="14" fill="#b0b0b0">0</text><rect x="64.5" y="289.7" width="4.5" height="1" fill="#7a7a7a"/><rect x="64.5" y="295.5" width="4.5" height="1" fill="#7a7a7a"/><rect x="64.5" y="301.4" width="4.5" height="1" fill="#7a7a7a"/><rect x="64.5" y="307.2" width="4.5" height="1" fill="#7a7a7a"/><rect x="63" y="313.0" width="6" height="1" fill="#7a7a7a"/><rect x="64.5" y="318.9" width="4.5" height="1" fill="#7a7a7a"/><rect x="64.5" y="324.7" width="4.5" height="1" fill="#7a7a7a"/><rect x="64.5" y="330.5" width="4.5" height="1" fill="#7a7a7a"/><rect x="64.5" y="336.4" width="4.5" height="1" fill="#7a7a7a"/><rect x="48" y="342.2" width="22" height="1" fill="#7a7a7a"/><text x="49.5" y="356.2" font-size="14" fill="#b0b0b0">2</text><text x="49.5" y="370.4" font-size="14" fill="#b0b0b0">0</text><text x="49.5" y="384.6" font-size="14" fill="#b0b0b0">0</text><rect x="64.5" y="348.0" width="4.5" height="1" fill="#7a7a7a"/><rect x="64.5" y="353.8" width="4.5" height="1" fill="#7a7a7a"/><rect x="64.5" y="359.7" width="4.5" height="1" fill="#7a7a7a"/><rect x="64.5" y="365.5" width="4.5" height="1" fill="#7a7a7a"/><rect x="63" y="371.3" width="6" height="1" fill="#7a7a7a"/><rect x="64.5" y="377.2" width="4.5" height="1" fill="#7a7a7a"/><rect x="64.5" y="383.0" width="4.5" height="1" fill="#7a7a7a"/><rect x="64.5" y="388.8" width="4.5" height="1" fill="#7a7a7a"/><rect x="64.5" y="394.6" width="4.5" height="1" fill="#7a7a7a"/><rect x="48" y="400.5" width="22" height="1" fill="#7a7a7a"/><text x="49.5" y="414.5" font-size="14" fill="#b0b0b0">3</text><text x="49.5" y="428.7" font-size="14" fill="#b0b0b0">0</text><text x="49.5" y="442.9" font-size="14" fill="#b0b0b0">0</text><rect x="64.5" y="406.3" width="4.5" height="1" fill="#7a7a7a"/><rect x="64.5" y="412.1" width="4.5" height="1" fill="#7a7a7a"/><rect x="64.5" y="418.0" width="4.5" height="1" fill="#7a7a7a"/><rect x="64.5" y="423.8" width="4.5" height="1" fill="#7a7a7a"/><rect x="63" y="429.6" width="6" height="1" fill="#7a7a7a"/><rect x="64.5" y="435.4" width="4.5" height="1" fill="#7a7a7a"/><rect x="64.5" y="441.3" width="4.5" height="1" fill="#7a7a7a"/><rect x="64.5" y="447.1" width="4.5" height="1" fill="#7a7a7a"/><rect x="64.5" y="452.9" width="4.5" height="1" fill="#7a7a7a"/><rect x="48" y="458.8" width="22" height="1" fill="#7a7a7a"/><text x="49.5" y="472.8" font-size="14" fill="#b0b0b0">4</text><text x="49.5" y="487.0" font-size="14" fill="#b0b0b0">0</text><text x="49.5" y="501.2" font-size="14" fill="#b0b0b0">0</text><rect x="64.5" y="464.6" width="4.5" height="1" fill="#7a7a7a"/><rect x="64.5" y="470.4" width="4.5" height="1" fill="#7a7a7a"/><rect x="64.5" y="476.2" width="4.5" height="1" fill="#7a7a7a"/><rect x="64.5" y="482.1" width="4.5" height="1" fill="#7a7a7a"/><rect x="63" y="487.9" width="6" height="1" fill="#7a7a7a"/><rect x="64.5" y="493.7" width="4.5" height="1" fill="#7a7a7a"/><rect x="64.5" y="499.6" width="4.5" height="1" fill="#7a7a7a"/><rect x="64.5" y="505.4" width="4.5" height="1" fill="#7a7a7a"/><rect x="64.5" y="511.2" width="4.5" height="1" fill="#7a7a7a"/><rect x="48" y="517.0" width="22" height="1" fill="#7a7a7a"/><text x="49.5" y="531.0" font-size="14" fill="#b0b0b0">5</text><text x="49.5" y="545.2" font-size="14" fill="#b0b0b0">0</text><text x="49.5" y="559.4" font-size="14" fill="#b0b0b0">0</text><rect x="64.5" y="522.9" width="4.5" height="1" fill="#7a7a7a"/><rect x="64.5" y="528.7" width="4.5" height="1" fill="#7a7a7a"/><rect x="64.5" y="534.5" width="4.5" height="1" fill="#7a7a7a"/><rect x="64.5" y="540.4" width="4.5" height="1" fill="#7a7a7a"/><rect x="63" y="546.2" width="6" height="1" fill="#7a7a7a"/><rect x="64.5" y="552.0" width="4.5" height="1" fill="#7a7a7a"/><rect x="64.5" y="557.9" width="4.5" height="1" fill="#7a7a7a"/><rect x="64.5" y="563.7" width="4.5" height="1" fill="#7a7a7a"/><rect x="64.5" y="569.5" width="4.5" height="1" fill="#7a7a7a"/><rect x="48" y="575.3" width="22" height="1" fill="#7a7a7a"/><text x="49.5" y="589.3" font-size="14" fill="#b0b0b0">6</text><text x="49.5" y="603.5" font-size="14" fill="#b0b0b0">0</text><text x="49.5" y="617.7" font-size="14" fill="#b0b0b0">0</text><rect x="64.5" y="581.2" width="4.5" height="1" fill="#7a7a7a"/><rect x="64.5" y="587.0" width="4.5" height="1" fill="#7a7a7a"/><rect x="64.5" y="592.8" width="4.5" height="1" fill="#7a7a7a"/><rect x="64.5" y="598.7" width="4.5" height="1" fill="#7a7a7a"/><rect x="63" y="604.5" width="6" height="1" fill="#7a7a7a"/><rect x="64.5" y="610.3" width="4.5" height="1" fill="#7a7a7a"/><rect x="64.5" y="616.1" width="4.5" height="1" fill="#7a7a7a"/><rect x="64.5" y="622.0" width="4.5" height="1" fill="#7a7a7a"/><rect x="64.5" y="627.8" width="4.5" height="1" fill="#7a7a7a"/><rect x="48" y="633.6" width="22" height="1" fill="#7a7a7a"/><text x="49.5" y="647.6" font-size="14" fill="#b0b0b0">7</text><text x="49.5" y="661.8" font-size="14" fill="#b0b0b0">0</text><text x="49.5" y="676.0" font-size="14" fill="#b0b0b0">0</text><rect x="64.5" y="639.5" width="4.5" height="1" fill="#7a7a7a"/><rect x="64.5" y="645.3" width="4.5" height="1" fill="#7a7a7a"/><rect x="64.5" y="651.1" width="4.5" height="1" fill="#7a7a7a"/><rect x="64.5" y="656.9" width="4.5" height="1" fill="#7a7a7a"/><rect x="63" y="662.8" width="6" height="1" fill="#7a7a7a"/><rect x="64.5" y="668.6" width="4.5" height="1" fill="#7a7a7a"/><rect x="64.5" y="674.4" width="4.5" height="1" fill="#7a7a7a"/><rect x="64.5" y="680.3" width="4.5" height="1" fill="#7a7a7a"/><rect x="64.5" y="686.1" width="4.5" height="1" fill="#7a7a7a"/><rect x="48" y="691.9" width="22" height="1" fill="#7a7a7a"/><text x="49.5" y="705.9" font-size="14" fill="#b0b0b0">8</text><text x="49.5" y="720.1" font-size="14" fill="#b0b0b0">0</text><text x="49.5" y="734.3" font-size="14" fill="#b0b0b0">0</text><rect x="64.5" y="697.7" width="4.5" height="1" fill="#7a7a7a"/><rect x="64.5" y="703.6" width="4.5" height="1" fill="#7a7a7a"/><rect x="64.5" y="709.4" width="4.5" height="1" fill="#7a7a7a"/><rect x="64.5" y="715.2" width="4.5" height="1" fill="#7a7a7a"/><rect x="63" y="721.1" width="6" height="1" fill="#7a7a7a"/><rect x="64.5" y="726.9" width="4.5" height="1" fill="#7a7a7a"/><rect x="64.5" y="732.7" width="4.5" height="1" fill="#7a7a7a"/><rect x="64.5" y="738.6" width="4.5" height="1" fill="#7a7a7a"/><rect x="64.5" y="744.4" width="4.5" height="1" fill="#7a7a7a"/><rect x="48" y="750.2" width="22" height="1" fill="#7a7a7a"/><text x="49.5" y="764.2" font-size="14" fill="#b0b0b0">9</text><text x="49.5" y="778.4" font-size="14" fill="#b0b0b0">0</text><text x="49.5" y="792.6" font-size="14" fill="#b0b0b0">0</text><rect x="64.5" y="756.0" width="4.5" height="1" fill="#7a7a7a"/><rect x="64.5" y="761.9" width="4.5" height="1" fill="#7a7a7a"/><rect x="64.5" y="767.7" width="4.5" height="1" fill="#7a7a7a"/><rect x="64.5" y="773.5" width="4.5" height="1" fill="#7a7a7a"/><rect x="63" y="779.4" width="6" height="1" fill="#7a7a7a"/><rect x="64.5" y="785.2" width="4.5" height="1" fill="#7a7a7a"/><rect x="64.5" y="791.0" width="4.5" height="1" fill="#7a7a7a"/><rect x="64.5" y="796.8" width="4.5" height="1" fill="#7a7a7a"/><rect x="64.5" y="802.7" width="4.5" height="1" fill="#7a7a7a"/><rect x="48" y="808.5" width="22" height="1" fill="#7a7a7a"/><text x="49.5" y="820.0" font-size="14" fill="#b0b0b0">1</text><text x="49.5" y="832.5" font-size="14" fill="#b0b0b0">0</text><text x="49.5" y="845.0" font-size="14" fill="#b0b0b0">0</text><text x="49.5" y="857.5" font-size="14" fill="#b0b0b0">0</text><rect x="64.5" y="814.3" width="4.5" height="1" fill="#7a7a7a"/><rect x="64.5" y="820.2" width="4.5" height="1" fill="#7a7a7a"/><rect x="64.5" y="826.0" width="4.5" height="1" fill="#7a7a7a"/><rect x="64.5" y="831.8" width="4.5" height="1" fill="#7a7a7a"/><rect x="63" y="837.6" width="6" height="1" fill="#7a7a7a"/><rect x="64.5" y="843.5" width="4.5" height="1" fill="#7a7a7a"/><rect x="64.5" y="849.3" width="4.5" height="1" fill="#7a7a7a"/><rect x="64.5" y="855.1" width="4.5" height="1" fill="#7a7a7a"/><rect x="64.5" y="861.0" width="4.5" height="1" fill="#7a7a7a"/><rect x="48" y="866.8" width="22" height="1" fill="#7a7a7a"/><text x="49.5" y="878.3" font-size="14" fill="#b0b0b0">1</text><text x="49.5" y="890.8" font-size="14" fill="#b0b0b0">1</text><text x="49.5" y="903.3" font-size="14" fill="#b0b0b0">0</text><text x="49.5" y="915.8" font-size="14" fill="#b0b0b0">0</text><rect x="64.5" y="872.6" width="4.5" height="1" fill="#7a7a7a"/><rect x="64.5" y="878.4" width="4.5" height="1" fill="#7a7a7a"/><rect x="64.5" y="884.3" width="4.5" height="1" fill="#7a7a7a"/><rect x="64.5" y="890.1" width="4.5" height="1" fill="#7a7a7a"/><rect x="63" y="895.9" width="6" height="1" fill="#7a7a7a"/><rect x="64.5" y="901.8" width="4.5" height="1" fill="#7a7a7a"/><rect x="64.5" y="907.6" width="4.5" height="1" fill="#7a7a7a"/><rect x="64.5" y="913.4" width="4.5" height="1" fill="#7a7a7a"/><rect x="64.5" y="919.3" width="4.5" height="1" fill="#7a7a7a"/><rect x="48" y="925.1" width="22" height="1" fill="#7a7a7a"/><text x="49.5" y="936.6" font-size="14" fill="#b0b0b0">1</text><text x="49.5" y="949.1" font-size="14" fill="#b0b0b0">2</text><text x="49.5" y="961.6" font-size="14" fill="#b0b0b0">0</text><text x="49.5" y="974.1" font-size="14" fill="#b0b0b0">0</text><rect x="64.5" y="930.9" width="4.5" height="1" fill="#7a7a7a"/><rect x="64.5" y="936.7" width="4.5" height="1" fill="#7a7a7a"/><rect x="64.5" y="942.6" width="4.5" height="1" fill="#7a7a7a"/><rect x="64.5" y="948.4" width="4.5" height="1" fill="#7a7a7a"/><rect x="63" y="954.2" width="6" height="1" fill="#7a7a7a"/><rect x="64.5" y="960.1" width="4.5" height="1" fill="#7a7a7a"/><rect x="64.5" y="965.9" width="4.5" height="1" fill="#7a7a7a"/><rect x="64.5" y="971.7" width="4.5" height="1" fill="#7a7a7a"/><rect x="64.5" y="977.5" width="4.5" height="1" fill="#7a7a7a"/></svg></div></div>
<div class="a" style="left:1236px;top:99px;width:19px;height:813px;background:#474747;"></div>
<div class="a" style="left:48px;top:912px;width:1208px;height:16px;background:#474747;"></div>
<div class="a" style="left:117px;top:912px;width:214px;height:16px;background:#535353;"></div>
<div class="a" style="left:1236px;top:912px;width:19px;height:16px;background:#535353;"></div>
<div class="t" style="left:67.5px;top:914.8px;font-size:12.3px;color:#e6e6e6;">100%</div>
<div class="t" style="left:161px;top:914.8px;font-size:12.9px;color:#d8d8d8;">Doc: 2.86M/0 bytes</div>
<svg style="left:0;top:0" width="400" height="928"><path d="M321 917.5 L325 921.5 L321 925.5" fill="none" stroke="#d8d8d8" stroke-width="1.2"/></svg>
<div class="a" style="left:1258px;top:65px;width:182px;height:13px;background:#424242;"></div>
<div class="a" style="left:1258px;top:79px;width:43px;height:849px;background:#535353;"></div>
<div class="a" style="left:1305px;top:79px;width:135px;height:849px;background:#535353;"></div>
<div class="a" style="left:1258px;top:126px;width:43px;height:1.5px;background:#3c3c3c;"></div>
<div class="a" style="left:1258px;top:206px;width:43px;height:1.5px;background:#3c3c3c;"></div>
<div class="a" style="left:1258px;top:287px;width:43px;height:1.5px;background:#3c3c3c;"></div>
<div class="a" style="left:1305px;top:126px;width:135px;height:1.5px;background:#3c3c3c;"></div>
<div class="a" style="left:1305px;top:206px;width:135px;height:1.5px;background:#3c3c3c;"></div>
<div class="a" style="left:1305px;top:319px;width:135px;height:1.5px;background:#3c3c3c;"></div>
<svg style="left:0;top:0" width="1440" height="928">
<g fill="#3e3e3e"><rect x="1268.5" y="83" width="1" height="4.5"/><rect x="1270.8" y="83" width="1" height="4.5"/><rect x="1273.1" y="83" width="1" height="4.5"/><rect x="1275.4" y="83" width="1" height="4.5"/><rect x="1277.7" y="83" width="1" height="4.5"/><rect x="1280.0" y="83" width="1" height="4.5"/><rect x="1282.3" y="83" width="1" height="4.5"/><rect x="1284.6" y="83" width="1" height="4.5"/><rect x="1286.9" y="83" width="1" height="4.5"/><rect x="1289.2" y="83" width="1" height="4.5"/></g>
<g fill="#3e3e3e"><rect x="1268.5" y="132" width="1" height="4.5"/><rect x="1270.8" y="132" width="1" height="4.5"/><rect x="1273.1" y="132" width="1" height="4.5"/><rect x="1275.4" y="132" width="1" height="4.5"/><rect x="1277.7" y="132" width="1" height="4.5"/><rect x="1280.0" y="132" width="1" height="4.5"/><rect x="1282.3" y="132" width="1" height="4.5"/><rect x="1284.6" y="132" width="1" height="4.5"/><rect x="1286.9" y="132" width="1" height="4.5"/><rect x="1289.2" y="132" width="1" height="4.5"/></g>
<g fill="#3e3e3e"><rect x="1268.5" y="212" width="1" height="4.5"/><rect x="1270.8" y="212" width="1" height="4.5"/><rect x="1273.1" y="212" width="1" height="4.5"/><rect x="1275.4" y="212" width="1" height="4.5"/><rect x="1277.7" y="212" width="1" height="4.5"/><rect x="1280.0" y="212" width="1" height="4.5"/><rect x="1282.3" y="212" width="1" height="4.5"/><rect x="1284.6" y="212" width="1" height="4.5"/><rect x="1286.9" y="212" width="1" height="4.5"/><rect x="1289.2" y="212" width="1" height="4.5"/></g>
<g fill="#3e3e3e"><rect x="1362.0" y="83" width="1" height="4.5"/><rect x="1364.3" y="83" width="1" height="4.5"/><rect x="1366.6" y="83" width="1" height="4.5"/><rect x="1368.9" y="83" width="1" height="4.5"/><rect x="1371.2" y="83" width="1" height="4.5"/><rect x="1373.5" y="83" width="1" height="4.5"/><rect x="1375.8" y="83" width="1" height="4.5"/><rect x="1378.1" y="83" width="1" height="4.5"/><rect x="1380.4" y="83" width="1" height="4.5"/><rect x="1382.7" y="83" width="1" height="4.5"/></g>
<g fill="#3e3e3e"><rect x="1362.0" y="132" width="1" height="4.5"/><rect x="1364.3" y="132" width="1" height="4.5"/><rect x="1366.6" y="132" width="1" height="4.5"/><rect x="1368.9" y="132" width="1" height="4.5"/><rect x="1371.2" y="132" width="1" height="4.5"/><rect x="1373.5" y="132" width="1" height="4.5"/><rect x="1375.8" y="132" width="1" height="4.5"/><rect x="1378.1" y="132" width="1" height="4.5"/><rect x="1380.4" y="132" width="1" height="4.5"/><rect x="1382.7" y="132" width="1" height="4.5"/></g>
<g fill="#3e3e3e"><rect x="1362.0" y="212" width="1" height="4.5"/><rect x="1364.3" y="212" width="1" height="4.5"/><rect x="1366.6" y="212" width="1" height="4.5"/><rect x="1368.9" y="212" width="1" height="4.5"/><rect x="1371.2" y="212" width="1" height="4.5"/><rect x="1373.5" y="212" width="1" height="4.5"/><rect x="1375.8" y="212" width="1" height="4.5"/><rect x="1378.1" y="212" width="1" height="4.5"/><rect x="1380.4" y="212" width="1" height="4.5"/><rect x="1382.7" y="212" width="1" height="4.5"/></g>
<path d="M1290 69.8 L1287.3 72 L1290 74.2 M1294.3 69.8 L1291.6 72 L1294.3 74.2" fill="none" stroke="#e0e0e0" stroke-width="1.3"/>
<path d="M1429.5 69.8 L1426.8 72 L1429.5 74.2 M1433.8 69.8 L1431.1 72 L1433.8 74.2" fill="none" stroke="#e0e0e0" stroke-width="1.3"/>
<g><rect x="1271.7" y="95.9" width="5.3" height="5" fill="#2a2a2a" stroke="#e6e6e6" stroke-width="1.1"/><rect x="1271.7" y="103.1" width="5.3" height="5" fill="#2a2a2a" stroke="#e6e6e6" stroke-width="1.1"/><rect x="1271.7" y="110.3" width="5.3" height="5" fill="#d6d6d6" stroke="#f0f0f0" stroke-width="1.1"/></g>
<path d="M1281 97 L1287.6 97 L1281 103.8 Z" fill="#e0e0e0"/><path d="M1283.5 100 C1287.5 102 1288.5 108.5 1281.6 113.6 C1285.5 108.5 1285 104 1282.3 101.3 Z" fill="#e0e0e0" stroke="#e0e0e0" stroke-width="0.6"/>
<path d="M1271.6 159.8 L1278.1 146.2 L1284.6 159.8 M1274 154.6 H1282.2" fill="none" stroke="#dcdcdc" stroke-width="1.35"/><rect x="1287" y="143.6" width="1.2" height="19" fill="#dcdcdc"/>
<path d="M1280.6 178 A4.8 4.6 0 0 0 1280.6 187.2 Z" fill="#dcdcdc"/><rect x="1279.8" y="178" width="7" height="1.5" fill="#dcdcdc"/><rect x="1280.4" y="178" width="1.6" height="17" fill="#dcdcdc"/><rect x="1284.8" y="178" width="1.6" height="17" fill="#dcdcdc"/>
<path d="M1283.2 224.5 A4.2 4 0 0 0 1283.2 232.5 Z" fill="#dcdcdc"/><rect x="1282.6" y="224.5" width="5.8" height="1.4" fill="#dcdcdc"/><rect x="1283" y="224.5" width="1.4" height="15.2" fill="#dcdcdc"/><rect x="1286.8" y="224.5" width="1.4" height="15.2" fill="#dcdcdc"/>
<rect x="1273.6" y="237.4" width="6" height="6" fill="#dcdcdc"/><rect x="1270" y="233.8" width="5.6" height="5.6" fill="#2a2a2a" stroke="#dcdcdc" stroke-width="1.2"/>
<path d="M1278.2 267.6 L1283.9 256 L1289.6 267.6 M1280.2 263.2 H1287.6" fill="none" stroke="#dcdcdc" stroke-width="1.35"/>
<rect x="1273.6" y="269.4" width="6" height="6" fill="#dcdcdc"/><rect x="1270" y="265.8" width="5.6" height="5.6" fill="#2a2a2a" stroke="#dcdcdc" stroke-width="1.2"/>
<path d="M1322 98.2 C1330 97.2 1336.8 99.5 1336.8 104.8 C1336.8 110.5 1330 113.2 1324 113 C1318.5 112.8 1315.6 110.5 1315.6 107.5 C1315.6 104.8 1318.5 104.5 1320.5 104.2 C1322.3 103.9 1322.5 102.5 1321 101.3 C1319.8 100.2 1320 98.5 1322 98.2 Z" fill="#dcdcdc"/>
<g fill="#4a4a4a"><circle cx="1319.8" cy="107.4" r="1.5"/><circle cx="1324.8" cy="109.6" r="1.5"/><circle cx="1330.3" cy="108.7" r="1.5"/><circle cx="1333.6" cy="105.3" r="1.5"/><circle cx="1330.3" cy="101.3" r="1.5"/></g>
<g fill="none" stroke="#dcdcdc" stroke-width="1.1"><path d="M1322.9 144.3 L1328 147 V153 L1322.9 155.7 L1317.8 153 V147 Z M1317.8 147 L1322.9 149.8 L1328 147 M1322.9 149.8 V155.7"/></g>
<g fill="#dcdcdc"><rect x="1330.2" y="144.5" width="5" height="4.5"/><rect x="1330.2" y="150.5" width="5" height="4.5"/><rect x="1317.4" y="158.2" width="17.8" height="4.4"/></g><path d="M1330.5 159.4 H1334 L1332.25 161.4 Z" fill="#3a3a3a"/><rect x="1318.6" y="159.6" width="10.5" height="0.8" fill="#8a8a8a"/>
<circle cx="1326" cy="186.3" r="8.3" fill="none" stroke="#dcdcdc" stroke-width="1.5"/><path d="M1331.9 180.4 A8.3 8.3 0 0 1 1320.1 192.2 Z" fill="#dcdcdc"/>
<path d="M1326.4 223.6 L1336.2 230.1 L1326.4 236.6 L1316.6 230.1 Z" fill="#dcdcdc"/><path d="M1316.6 234.6 L1320 232.4 L1326.4 236.6 L1332.8 232.4 L1336.2 234.6 L1326.4 243.2 Z" fill="#dcdcdc"/>
<circle cx="1326.3" cy="262.5" r="6.2" fill="#a6a6a6"/><circle cx="1322.4" cy="269.8" r="6.2" fill="#d8d8d8"/><circle cx="1330.4" cy="269.8" r="6.2" fill="#b4b4b4"/>
<path d="M1322.6 264.5 L1326.3 270.5 L1329.9 264.5 C1328.2 262.8 1324.4 262.8 1322.6 264.5 Z" fill="#7a7e8c"/><path d="M1326.3 270.5 L1323.9 275.3 C1325.4 276.2 1327.3 276.2 1328.7 275.3 Z" fill="#7a7e8c"/><path d="M1326.3 264.8 L1329.2 270.2 H1323.4 Z" fill="#333"/>
<g fill="none" stroke="#dcdcdc" stroke-width="1.1"><path d="M1318.6 303.5 C1318.6 297 1322 292.8 1326.4 292.8 C1330.8 292.8 1333.8 297 1333.8 303.5"/><path d="M1317 292.8 H1336"/><rect x="1316.8" y="303.8" width="3.8" height="3.8"/><rect x="1331.8" y="303.8" width="3.8" height="3.8"/></g>
<g fill="#dcdcdc"><rect x="1313.8" y="290.6" width="4.4" height="4.4"/><rect x="1334.6" y="290.6" width="4.4" height="4.4"/><rect x="1324.6" y="291.2" width="3.4" height="3.2"/></g>
</svg>
<div class="t b" style="left:1348px;top:101.8px;font-size:12.5px;color:#ececec;">Color</div>
<div class="t b" style="left:1348px;top:149.2px;font-size:12.5px;color:#ececec;">Properties</div>
<div class="t b" style="left:1348px;top:181.8px;font-size:12.5px;color:#ececec;">Adjustments</div>
<div class="t b" style="left:1348px;top:229.4px;font-size:12.5px;color:#ececec;">Layers</div>
<div class="t b" style="left:1348px;top:262.1px;font-size:12.5px;color:#ececec;">Channels</div>
<div class="t b" style="left:1348px;top:294.4px;font-size:12.5px;color:#ececec;">Paths</div>
<div class="a" style="left:293px;top:168px;width:759px;height:698px;background:#535353;border-radius:4px 4px 0 0"></div>
<div class="a" style="left:293px;top:168px;width:759px;height:15px;background:#464646;border-radius:4px 4px 0 0"></div>
<div class="a" style="left:293px;top:183px;width:759px;height:1px;background:#383838;"></div>
<div class="a" style="left:293px;top:184px;width:759px;height:33px;background:#424242;"></div>
<div class="a" style="left:293px;top:184px;width:78px;height:33px;background:#535353;"></div>
<div class="a" style="left:371px;top:216px;width:681px;height:1px;background:#3c3c3c;"></div>
<div class="t b" style="left:304px;top:194px;font-size:12.1px;color:#ececec;">Swatches</div>
<div class="a" style="left:300px;top:227px;width:744px;height:21px;background:#4d4d4d;"></div>
<div class="a" style="left:303px;top:228.3px;width:19px;height:19px;background:#eef872;"></div>
<div class="a" style="left:324px;top:228.3px;width:19px;height:19px;background:#feb15b;"></div>
<div class="a" style="left:345px;top:228.3px;width:19px;height:19px;background:#5ff1f7;"></div>
<div class="a" style="left:366px;top:228.3px;width:19px;height:19px;background:#dc80e8;"></div>
<div class="a" style="left:387px;top:228.3px;width:19px;height:19px;background:#00f966;"></div>
<div class="a" style="left:408px;top:228.3px;width:19px;height:19px;background:#dc80e8;"></div>
<div class="a" style="left:429px;top:228.3px;width:19px;height:19px;background:#eff0ee;"></div>
<div class="a" style="left:450px;top:228.3px;width:19px;height:19px;background:#262626;"></div>
<div class="a" style="left:471px;top:228.3px;width:19px;height:19px;background:conic-gradient(#686868 25%,#2e2e2e 0 50%,#686868 0 75%,#2e2e2e 0) 0 0/2px 2px;"></div>
<div class="a" style="left:492px;top:228.3px;width:19px;height:19px;background:#72778a;"></div>
<div class="a" style="left:513px;top:228.3px;width:19px;height:19px;background:#72778a;"></div>
<div class="a" style="left:534px;top:228.3px;width:19px;height:19px;background:#26282d;"></div>
<div class="a" style="left:555px;top:228.3px;width:19px;height:19px;background:#272727;"></div>
<div class="a" style="left:576px;top:228.3px;width:19px;height:19px;background:#efefef;"></div>
<div class="a" style="left:597px;top:228.3px;width:19px;height:19px;background:#ececec;"></div>
<div class="a" style="left:293px;top:257px;width:759px;height:1px;background:#3e3e3e;"></div>
<div class="a" style="left:293px;top:258px;width:739px;height:359px;background:#424242;"></div>
<div class="a" style="left:293px;top:617px;width:739px;height:209px;background:#4c4c4c;"></div>
<div class="a" style="left:1032px;top:258px;width:20px;height:568px;background:#484848;"></div>
<div class="a" style="left:1050px;top:258px;width:2px;height:568px;background:#4f4f4f;"></div>
<div class="a" style="left:293px;top:292px;width:739px;height:21px;background:#4c4c4c;"></div>
<div class="a" style="left:319px;top:293.5px;width:19px;height:19px;background:#26282d;"></div>
<div class="a" style="left:340px;top:293.5px;width:19px;height:19px;background:#72778a;"></div>
<div class="a" style="left:361px;top:293.5px;width:19px;height:19px;background:conic-gradient(#686868 25%,#2e2e2e 0 50%,#686868 0 75%,#2e2e2e 0) 0 0/2px 2px;"></div>
<div class="a" style="left:382px;top:293.5px;width:19px;height:19px;background:#eff0ee;"></div>
<div class="a" style="left:403px;top:293.5px;width:19px;height:19px;background:#dc80e8;"></div>
<div class="a" style="left:424px;top:293.5px;width:19px;height:19px;background:#00f966;"></div>
<div class="a" style="left:445px;top:293.5px;width:19px;height:19px;background:#feb15b;"></div>
<div class="a" style="left:466px;top:293.5px;width:19px;height:19px;background:#dc80e8;"></div>
<div class="a" style="left:487px;top:293.5px;width:19px;height:19px;background:#5ff1f7;"></div>
<div class="a" style="left:508px;top:293.5px;width:19px;height:19px;background:#feb15b;"></div>
<div class="a" style="left:529px;top:293.5px;width:19px;height:19px;background:#eef872;"></div>
<div class="a" style="left:293px;top:347px;width:739px;height:1px;background:#474747;"></div>
<div class="a" style="left:293px;top:381px;width:739px;height:1px;background:#474747;"></div>
<div class="a" style="left:293px;top:414px;width:739px;height:1px;background:#474747;"></div>
<div class="a" style="left:293px;top:448px;width:739px;height:1px;background:#474747;"></div>
<div class="a" style="left:293px;top:482px;width:739px;height:1px;background:#474747;"></div>
<div class="a" style="left:293px;top:516px;width:739px;height:1px;background:#474747;"></div>
<div class="a" style="left:293px;top:550px;width:739px;height:1px;background:#474747;"></div>
<div class="a" style="left:293px;top:583px;width:739px;height:1px;background:#474747;"></div>
<div class="t" style="left:344px;top:271px;font-size:12.1px;color:#e2e2e2;">Dracula</div>
<div class="t" style="left:344px;top:324.5px;font-size:12.1px;color:#e2e2e2;">RGB</div>
<div class="t" style="left:344px;top:358.3px;font-size:12.1px;color:#e2e2e2;">CMYK</div>
<div class="t" style="left:344px;top:392.1px;font-size:12.1px;color:#e2e2e2;">Grayscale</div>
<div class="t" style="left:344px;top:425.9px;font-size:12.1px;color:#e2e2e2;">Pastel</div>
<div class="t" style="left:344px;top:459.7px;font-size:12.1px;color:#e2e2e2;">Light</div>
<div class="t" style="left:344px;top:493.5px;font-size:12.1px;color:#e2e2e2;">Pure</div>
<div class="t" style="left:344px;top:527.3px;font-size:12.1px;color:#e2e2e2;">Dark</div>
<div class="t" style="left:344px;top:561.1px;font-size:12.1px;color:#e2e2e2;">Darker</div>
<div class="t" style="left:344px;top:594.9px;font-size:12.1px;color:#e2e2e2;">Pale</div>
<div class="a" style="left:293px;top:258px;width:2px;height:568px;background:#404040;"></div>
<div class="a" style="left:293px;top:826px;width:759px;height:2px;background:#3c3c3c;"></div>
<div class="a" style="left:293px;top:856px;width:759px;height:2px;background:#3a3a3a;"></div>
<svg style="left:0;top:0" width="1440" height="928">
<path d="M303.5 272.6 L308 277.4 L312.5 272.6" fill="none" stroke="#d8d8d8" stroke-width="1.3"/>
<path d="M318.8 269.5 H326 L327.5 271.5 H334.5 V281.8 H318.8 Z" fill="none" stroke="#dcdcdc" stroke-width="1.3"/><rect x="318.5" y="275" width="16.5" height="7.2" fill="#dcdcdc"/>
<path d="M305.5 325.0 L309.5 330.0 L305.5 335.0" fill="none" stroke="#d8d8d8" stroke-width="1.3"/>
<rect x="318.3" y="323.4" width="8" height="2" fill="#a0a0a0"/><rect x="318.3" y="325.7" width="16.6" height="10.6" fill="#dcdcdc"/>
<path d="M305.5 358.8 L309.5 363.8 L305.5 368.8" fill="none" stroke="#d8d8d8" stroke-width="1.3"/>
<rect x="318.3" y="357.2" width="8" height="2" fill="#a0a0a0"/><rect x="318.3" y="359.5" width="16.6" height="10.6" fill="#dcdcdc"/>
<path d="M305.5 392.6 L309.5 397.6 L305.5 402.6" fill="none" stroke="#d8d8d8" stroke-width="1.3"/>
<rect x="318.3" y="391.0" width="8" height="2" fill="#a0a0a0"/><rect x="318.3" y="393.3" width="16.6" height="10.6" fill="#dcdcdc"/>
<path d="M305.5 426.4 L309.5 431.4 L305.5 436.4" fill="none" stroke="#d8d8d8" stroke-width="1.3"/>
<rect x="318.3" y="424.8" width="8" height="2" fill="#a0a0a0"/><rect x="318.3" y="427.1" width="16.6" height="10.6" fill="#dcdcdc"/>
<path d="M305.5 460.2 L309.5 465.2 L305.5 470.2" fill="none" stroke="#d8d8d8" stroke-width="1.3"/>
<rect x="318.3" y="458.6" width="8" height="2" fill="#a0a0a0"/><rect x="318.3" y="460.9" width="16.6" height="10.6" fill="#dcdcdc"/>
<path d="M305.5 494.0 L309.5 499.0 L305.5 504.0" fill="none" stroke="#d8d8d8" stroke-width="1.3"/>
<rect x="318.3" y="492.4" width="8" height="2" fill="#a0a0a0"/><rect x="318.3" y="494.7" width="16.6" height="10.6" fill="#dcdcdc"/>
<path d="M305.5 527.8 L309.5 532.8 L305.5 537.8" fill="none" stroke="#d8d8d8" stroke-width="1.3"/>
<rect x="318.3" y="526.2" width="8" height="2" fill="#a0a0a0"/><rect x="318.3" y="528.5" width="16.6" height="10.6" fill="#dcdcdc"/>
<path d="M305.5 561.6 L309.5 566.6 L305.5 571.6" fill="none" stroke="#d8d8d8" stroke-width="1.3"/>
<rect x="318.3" y="560.0" width="8" height="2" fill="#a0a0a0"/><rect x="318.3" y="562.3" width="16.6" height="10.6" fill="#dcdcdc"/>
<path d="M305.5 595.4 L309.5 600.4 L305.5 605.4" fill="none" stroke="#d8d8d8" stroke-width="1.3"/>
<rect x="318.3" y="593.8" width="8" height="2" fill="#a0a0a0"/><rect x="318.3" y="596.1" width="16.6" height="10.6" fill="#dcdcdc"/>
<path d="M300.3 173.8 L306.2 179.7 M306.2 173.8 L300.3 179.7" stroke="#d0d0d0" stroke-width="1.6"/>
<path d="M1039 174 L1036 176.7 L1039 179.4 M1043.5 174 L1040.5 176.7 L1043.5 179.4" fill="none" stroke="#e0e0e0" stroke-width="1.3"/>
<g fill="#d8d8d8"><rect x="1034.5" y="196" width="11.8" height="1.3"/><rect x="1034.5" y="199.4" width="11.8" height="1.3"/><rect x="1034.5" y="202.8" width="11.8" height="1.3"/></g>
<rect x="938" y="835.5" width="7" height="2" fill="#a8a8a8"/><rect x="938" y="837.5" width="14.5" height="9.5" fill="#dcdcdc"/>
<rect x="973.5" y="835.3" width="12" height="12" fill="none" stroke="#dcdcdc" stroke-width="1.3"/><path d="M979.5 838 V844.6 M976.2 841.3 H982.8" stroke="#dcdcdc" stroke-width="1.3"/>
<g fill="none" stroke="#8a8fa0" stroke-width="1.1"><path d="M1007 837 H1018 M1010.5 837 V835 H1014.5 V837 M1008.3 837.5 V847 H1016.7 V837.5 M1011 839.5 V845 M1013.5 839.5 V845"/></g>
<g fill="#444"><rect x="660.0" y="858" width="1" height="5"/><rect x="662.2" y="858" width="1" height="5"/><rect x="664.4" y="858" width="1" height="5"/><rect x="666.6" y="858" width="1" height="5"/><rect x="668.8" y="858" width="1" height="5"/><rect x="671.0" y="858" width="1" height="5"/><rect x="673.2" y="858" width="1" height="5"/><rect x="675.4" y="858" width="1" height="5"/><rect x="677.6" y="858" width="1" height="5"/><rect x="679.8" y="858" width="1" height="5"/><rect x="682.0" y="858" width="1" height="5"/><rect x="684.2" y="858" width="1" height="5"/></g>
</svg>
<div class="a" style="left:0px;top:0px;width:1px;height:928px;background:#3a3a3a;"></div>
</body></html>
